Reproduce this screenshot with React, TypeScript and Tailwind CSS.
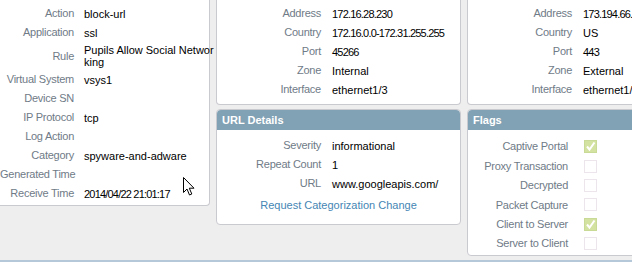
import React from 'react'

const font = { fontFamily: '"Liberation Sans", Arial, sans-serif' }

type Row = { label: string; value?: React.ReactNode; tall?: boolean }

const logRows: Row[] = [
  { label: 'Action', value: 'block-url' },
  { label: 'Application', value: 'ssl' },
  {
    label: 'Rule',
    value: (
      <>
        Pupils Allow Social Networ
        <br />
        king
      </>
    ),
    tall: true,
  },
  { label: 'Virtual System', value: 'vsys1' },
  { label: 'Device SN' },
  { label: 'IP Protocol', value: 'tcp' },
  { label: 'Log Action' },
  { label: 'Category', value: 'spyware-and-adware' },
  { label: 'Generated Time' },
  { label: 'Receive Time', value: '2014/04/22 21:01:17' },
]

const sourceRows: Row[] = [
  { label: 'Address', value: '172.16.28.230' },
  { label: 'Country', value: '172.16.0.0-172.31.255.255' },
  { label: 'Port', value: '45266' },
  { label: 'Zone', value: 'Internal' },
  { label: 'Interface', value: 'ethernet1/3' },
]

const destRows: Row[] = [
  { label: 'Address', value: '173.194.66.95' },
  { label: 'Country', value: 'US' },
  { label: 'Port', value: '443' },
  { label: 'Zone', value: 'External' },
  { label: 'Interface', value: 'ethernet1/4' },
]

const urlRows: Row[] = [
  { label: 'Severity', value: 'informational' },
  { label: 'Repeat Count', value: '1' },
  { label: 'URL', value: 'www.googleapis.com/' },
]

const flags = [
  { label: 'Captive Portal', on: true },
  { label: 'Proxy Transaction', on: false },
  { label: 'Decrypted', on: false },
  { label: 'Packet Capture', on: false },
  { label: 'Client to Server', on: true },
  { label: 'Server to Client', on: false },
]

// digits in the original font are narrow, tighten numeric values
const isNumeric = (v: React.ReactNode) => typeof v === 'string' && /^[\d./:\- ]+$/.test(v)

const Field = ({ row, labelW, gap }: { row: Row; labelW: string; gap: string }) => (
  <div className={`flex items-center ${row.tall ? 'h-[28px]' : 'h-[19px]'}`}>
    <div
      className={`${labelW} shrink-0 whitespace-nowrap text-right tracking-[-0.25px] text-[#6f7b87]`}
    >
      {row.label}
    </div>
    <div
      className={`${gap} whitespace-nowrap leading-[12px] text-black ${
        isNumeric(row.value) ? 'tracking-[-0.8px]' : ''
      }`}
    >
      {row.value}
    </div>
  </div>
)

const Header = ({ title }: { title: string }) => (
  <div className="flex h-[20px] items-center rounded-t-[4px] bg-[#81a1b4] pl-[5px] text-[11px] font-bold text-white">
    {title}
  </div>
)

const Checkbox = ({ on }: { on: boolean }) =>
  on ? (
    <div className="flex h-[13px] w-[13px] items-center justify-center border border-[#c9d996] bg-[#d3e2a0]">
      <svg width="11" height="11" viewBox="0 0 11 11">
        <path d="M2 5.5 L4.5 8.5 L9.5 1.5" fill="none" stroke="#ffffff" strokeWidth="2" />
      </svg>
    </div>
  ) : (
    <div className="h-[13px] w-[13px] border border-[#ece5eb] bg-white" />
  )

export default function App() {
  return (
    <div
      className="relative flex h-[262px] w-[632px] flex-col overflow-hidden bg-[#eeeeee] text-[11px]"
      style={font}
    >
      <div className="flex flex-1 items-start gap-[6px]">
        {/* log info */}
        <div className="h-[206px] w-[210px] shrink-0 rounded-br-[4px] border-r border-b border-[#c9c9d0] bg-white pt-[4px]">
          {logRows.map((r) => (
            <Field key={r.label} row={r} labelW="w-[74px]" gap="ml-[10px]" />
          ))}
        </div>

        {/* source / url details */}
        <div className="flex w-[245px] shrink-0 flex-col gap-[4px]">
          <div className="h-[105px] rounded-b-[4px] border-x border-b border-[#c9c9d0] bg-white pt-[4px]">
            {sourceRows.map((r) => (
              <Field key={r.label} row={r} labelW="w-[104px]" gap="ml-[11px]" />
            ))}
          </div>
          <div className="h-[116px] rounded-[4px] border border-[#c9c9d0] bg-white">
            <Header title="URL Details" />
            <div className="pt-[6px]">
              {urlRows.map((r) => (
                <Field key={r.label} row={r} labelW="w-[104px]" gap="ml-[11px]" />
              ))}
            </div>
            <div className="mt-[6px] text-center leading-[13px] text-[#4586b4]">
              Request Categorization Change
            </div>
          </div>
        </div>

        {/* destination / flags */}
        <div className="flex w-[245px] shrink-0 flex-col gap-[4px]">
          <div className="h-[105px] rounded-b-[4px] border-x border-b border-[#c9c9d0] bg-white pt-[4px]">
            {destRows.map((r) => (
              <Field key={r.label} row={r} labelW="w-[104px]" gap="ml-[11px]" />
            ))}
          </div>
          <div className="h-[147px] rounded-[4px] border border-[#c9c9d0] bg-white">
            <Header title="Flags" />
            <div className="pt-[7px]">
              {flags.map((f) => (
                <div key={f.label} className="flex h-[19.4px] items-center">
                  <div className="w-[100px] shrink-0 whitespace-nowrap text-right tracking-[-0.25px] text-[#6f7b87]">
                    {f.label}
                  </div>
                  <div className="ml-[16px]">
                    <Checkbox on={f.on} />
                  </div>
                </div>
              ))}
            </div>
          </div>
        </div>
      </div>
      <div className="h-[2px] bg-[#b5c8da]" />

      {/* mouse pointer */}
      <svg className="absolute left-[183px] top-[177px]" width="13" height="20" viewBox="0 0 13 20">
        <path
          d="M0.5 0.5 L0.5 15.5 L4 12 L6.5 18 L8.8 17 L6.3 11.2 L11 11.2 Z"
          fill="#ffffff"
          stroke="#000000"
          strokeWidth="1"
          strokeLinejoin="miter"
        />
      </svg>
    </div>
  )
}
